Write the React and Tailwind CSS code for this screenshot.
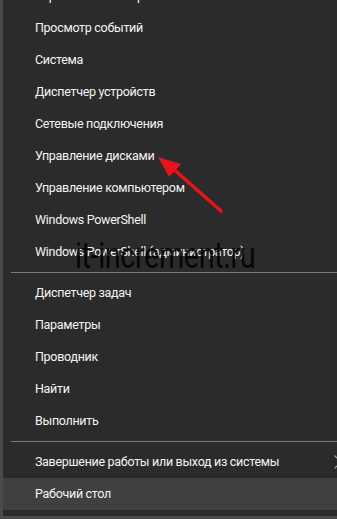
import { ChevronRight } from "lucide-react";

const groupA = [
  "Управление электропитанием",
  "Просмотр событий",
  "Система",
  "Диспетчер устройств",
  "Сетевые подключения",
  "Управление дисками",
  "Управление компьютером",
  "Windows PowerShell",
  "Windows PowerShell (администратор)",
];

const groupB = ["Диспетчер задач", "Параметры", "Проводник", "Найти", "Выполнить"];

function Item({ label, active, submenu }) {
  return (
    <div
      className={`h-8 flex items-center justify-between pl-[32px] ${
        active ? "bg-[#404040]" : ""
      }`}
    >
      <span className="text-[12.5px] tracking-[-0.3px] text-[#f4f4f4] whitespace-nowrap">{label}</span>
      {submenu && (
        <ChevronRight className="w-6 h-6 shrink-0 text-[#a0a0a0] mr-[-13px]" strokeWidth={1.2} />
      )}
    </div>
  );
}

function Separator() {
  return (
    <div className="py-1">
      <div className="h-px ml-2 bg-[#7c7c7c]" />
    </div>
  );
}

export default function App() {
  return (
    <div
      className="relative w-[337px] h-[519px] overflow-hidden bg-[#2b2b2b] border-l-[3px] border-b-[3px] border-[#4a4a4a]"
      style={{ fontFamily: 'Roboto, "Noto Sans", sans-serif' }}
    >
      <div className="-mt-5">
        {groupA.map((t) => (
          <Item key={t} label={t} />
        ))}
        <Separator />
        {groupB.map((t) => (
          <Item key={t} label={t} />
        ))}
        <Separator />
        <Item label="Завершение работы или выход из системы" submenu />
        <Item label="Рабочий стол" active />
      </div>

      {/* watermark */}
      <div
        className="absolute left-[72px] top-[238px] text-[36px] leading-none tracking-[-0.5px] text-black/85 origin-left scale-x-80 pointer-events-none whitespace-nowrap"
        style={{ fontFamily: "Roboto, sans-serif" }}
      >
        it-increment.ru
      </div>

      {/* red arrow */}
      <svg className="absolute left-0 top-0" width="337" height="519">
        <line x1="218" y1="211" x2="167" y2="166" stroke="#e8141b" strokeWidth="3.5" strokeLinecap="round" />
        <polygon points="155,157 178,164 166,177" fill="#e8141b" />
      </svg>
    </div>
  );
}
